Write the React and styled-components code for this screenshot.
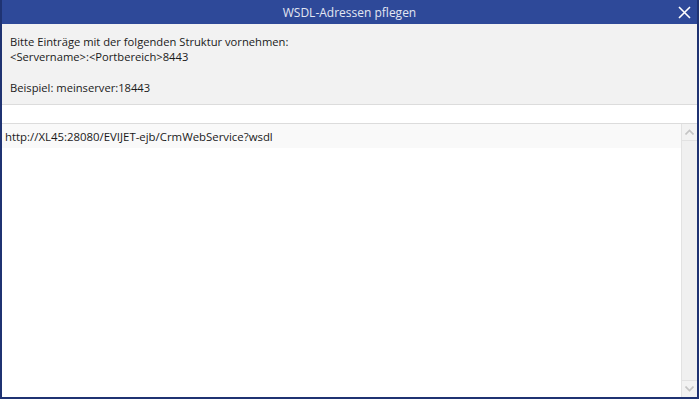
import React from 'react';
import styled, { createGlobalStyle } from 'styled-components';

const GlobalStyle = createGlobalStyle`
  html, body {
    margin: 0;
    padding: 0;
    width: 699px;
    height: 399px;
    overflow: hidden;
    font-family: "Open Sans", "Noto Sans", sans-serif;
  }
`;

const Window = styled.div`
  box-sizing: border-box;
  width: 699px;
  height: 399px;
  display: flex;
  flex-direction: column;
  background: #2e4999;
  border: solid #1f3372;
  border-width: 0 2px 2px 2px;
`;

const TitleBar = styled.div`
  height: 24px;
  flex-shrink: 0;
  display: flex;
  align-items: center;
  justify-content: center;
  position: relative;
  color: #e3e7f2;
  font-size: 12px;
`;

const CloseButton = styled.button`
  position: absolute;
  right: 4px;
  top: 3px;
  width: 18px;
  height: 18px;
  padding: 0;
  border: none;
  background: transparent;
  display: flex;
  align-items: center;
  justify-content: center;
`;

const Info = styled.div`
  background: #f2f2f2;
  padding: 10px 8px 9px;
  height: 80px;
  box-sizing: border-box;
  font-size: 11.2px;
  line-height: 15px;
  color: #1a1a1a;
  flex-shrink: 0;
`;

const Line = styled.div`
  min-height: 15px;
  margin-top: ${({ gap }) => (gap ? '16px' : '0')};
`;

const Input = styled.input`
  box-sizing: border-box;
  height: 20px;
  width: 100%;
  margin: 0;
  border: none;
  border-top: 1px solid #dcdcdc;
  border-bottom: 1px solid #dcdcdc;
  background: #fff;
  outline: none;
  flex-shrink: 0;
`;

const ListArea = styled.div`
  flex: 1;
  display: flex;
  background: #fff;
  min-height: 0;
`;

const List = styled.div`
  flex: 1;
`;

const Row = styled.div`
  height: 24px;
  padding: 0 3px;
  display: flex;
  align-items: center;
  font-size: 11.4px;
  color: #1a1a1a;
  background: ${({ selected }) => (selected ? '#f9f9f9' : '#fff')};
`;

const ScrollBar = styled.div`
  width: 15px;
  border-left: 1px solid #e2e2e2;
  background: #f0f0f0;
  display: flex;
  flex-direction: column;
  justify-content: space-between;
`;

const ScrollArrow = styled.div`
  height: 16px;
  display: flex;
  align-items: center;
  justify-content: center;
  background: #f2f2f2;
  border-bottom: ${({ up }) => (up ? '1px solid #e2e2e2' : 'none')};
  border-top: ${({ up }) => (up ? 'none' : '1px solid #e2e2e2')};
`;

const Chevron = ({ up }) => (
  <svg width="9" height="6" viewBox="0 0 9 6">
    <path
      d={up ? 'M0.5 5.5 L4.5 1.5 L8.5 5.5' : 'M0.5 0.5 L4.5 4.5 L8.5 0.5'}
      fill="none"
      stroke="#c4c4c4"
      strokeWidth="1.6"
    />
  </svg>
);

export default function App() {
  return (
    <>
      <GlobalStyle />
      <Window>
        <TitleBar>
          WSDL-Adressen pflegen
          <CloseButton aria-label="Schließen">
            <svg width="13" height="13" viewBox="0 0 13 13">
              <path d="M1 1 L12 12 M12 1 L1 12" stroke="#fff" strokeWidth="1.6" />
            </svg>
          </CloseButton>
        </TitleBar>
        <Info>
          <Line>Bitte Einträge mit der folgenden Struktur vornehmen:</Line>
          <Line>&lt;Servername&gt;:&lt;Portbereich&gt;8443</Line>
          <Line gap>Beispiel: meinserver:18443</Line>
        </Info>
        <Input />
        <ListArea>
          <List>
            <Row selected>http://XL45:28080/EVIJET-ejb/CrmWebService?wsdl</Row>
          </List>
          <ScrollBar>
            <ScrollArrow up>
              <Chevron up />
            </ScrollArrow>
            <ScrollArrow>
              <Chevron />
            </ScrollArrow>
          </ScrollBar>
        </ListArea>
      </Window>
    </>
  );
}
